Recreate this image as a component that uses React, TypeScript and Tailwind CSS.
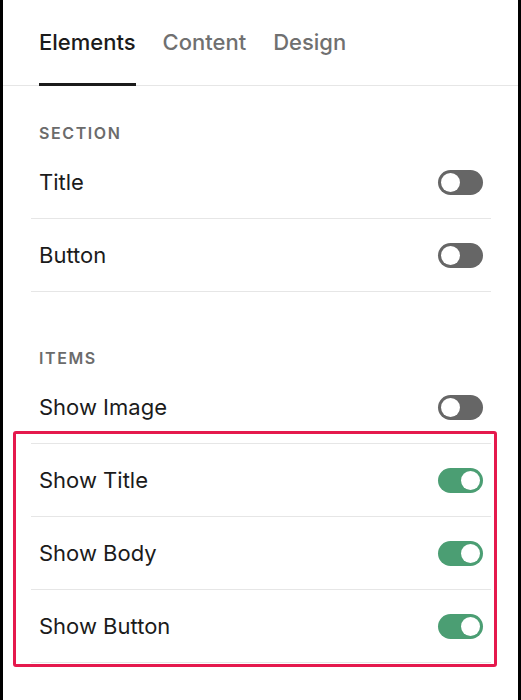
import { useState } from "react";

type Item = { label: string; on: boolean };

function Toggle({ on, onClick }: { on: boolean; onClick: () => void }) {
  return (
    <button
      onClick={onClick}
      className={`relative h-[25px] w-[45px] shrink-0 rounded-full ${on ? "bg-[#4b9e73]" : "bg-[#666666]"}`}
    >
      <span
        className={`absolute top-[3px] h-[19px] w-[19px] rounded-full bg-white ${on ? "left-[23px]" : "left-[3px]"}`}
      />
    </button>
  );
}

function Row({ item, onToggle }: { item: Item; onToggle: () => void }) {
  return (
    <div className="flex h-[73px] items-center justify-between border-b border-[#e6e6e6] px-2">
      <span className="text-[22px] text-[#1b1b1b]">{item.label}</span>
      <Toggle on={item.on} onClick={onToggle} />
    </div>
  );
}

export default function App() {
  const [section, setSection] = useState<Item[]>([
    { label: "Title", on: false },
    { label: "Button", on: false },
  ]);
  const [items, setItems] = useState<Item[]>([
    { label: "Show Image", on: false },
    { label: "Show Title", on: true },
    { label: "Show Body", on: true },
    { label: "Show Button", on: true },
  ]);

  const flip = (list: Item[], i: number) => list.map((it, j) => (j === i ? { ...it, on: !it.on } : it));

  return (
    <div className="min-h-[700px] bg-black px-[3px] font-['Inter',sans-serif]">
      <div className="min-h-[700px] bg-white">
        {/* tabs */}
        <div className="flex gap-[27px] border-b border-[#e6e6e6] px-9 pt-7">
          <div className="-mb-px border-b-[3px] border-[#1b1b1b] pb-[27px] text-[22px] leading-7 font-medium text-[#1b1b1b]">
            Elements
          </div>
          <div className="pb-[27px] text-[22px] leading-7 font-medium text-[#707070]">Content</div>
          <div className="pb-[27px] text-[22px] leading-7 font-medium text-[#707070]">Design</div>
        </div>

        <div className="pr-[27px] pl-7">
          <p className="mt-[37px] mb-[3px] px-2 text-[16px] leading-5 font-semibold tracking-[0.1em] text-[#6b6b6b]">
            SECTION
          </p>
          {section.map((it, i) => (
            <Row key={it.label} item={it} onToggle={() => setSection(flip(section, i))} />
          ))}

          <p className="mt-[56px] mb-[3px] px-2 text-[16px] leading-5 font-semibold tracking-[0.1em] text-[#6b6b6b]">
            ITEMS
          </p>
          <div className="relative">
            {items.map((it, i) => (
              <Row key={it.label} item={it} onToggle={() => setItems(flip(items, i))} />
            ))}
            {/* highlight annotation */}
            <div className="pointer-events-none absolute top-[60px] -right-[6px] -bottom-[4px] -left-[18px] rounded-[3px] border-[3px] border-[#e5194d]" />
          </div>
        </div>
      </div>
    </div>
  );
}
